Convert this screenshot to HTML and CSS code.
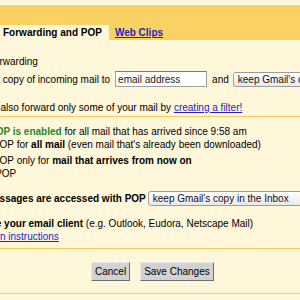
FILE: index.html
```html
<!DOCTYPE html>
<html>
<head>
<meta charset="utf-8">
<title>Settings - Forwarding and POP</title>
<link rel="stylesheet" href="styles.css">
</head>
<body>
<div id="onglets">
	<span class="onglet actif">Forwarding and POP</span>
	<a href="#" class="onglet lien">Web Clips</a>
</div>
<form id="reglages" action="#" method="post">
	<!-- Forwarding -->
	<div class="bloc" id="bloc-forward">
		<div class="colonne">
			<label class="ligne l-disable"><input type="radio" name="fwd" checked> Disable forwarding</label>
			<label class="ligne l-forward"><input type="radio" name="fwd"> Forward a copy of incoming mail to
				<input type="text" class="adresse" value="email address">
				<span class="et">and</span>
				<select class="choix">
					<option>keep Gmail's copy in the Inbox</option>
					<option>archive Gmail's copy</option>
					<option>delete Gmail's copy</option>
				</select>
			</label>
			<p class="ligne l-tip"><b>Tip:</b>&nbsp;You can also forward only some of your mail by&nbsp;<a href="#">creating a filter!</a></p>
		</div>
	</div>
	<!-- POP Download -->
	<div class="bloc" id="bloc-pop">
		<div class="colonne">
			<p class="ligne l-status">1. Status:&nbsp;<span class="actif-pop">POP is enabled</span>&nbsp;for all mail that has arrived since 9:58 am</p>
			<label class="ligne l-pop"><input type="radio" name="pop"> Enable POP for&nbsp;<b>all mail</b>&nbsp;(even mail that's already been downloaded)</label>
			<label class="ligne l-pop l-pop2"><input type="radio" name="pop"> Enable POP only for&nbsp;<b>mail that arrives from now on</b></label>
			<label class="ligne l-pop"><input type="radio" name="pop"> Disable POP</label>
			<div class="ligne l-when"><b>2. When messages are accessed with POP</b>
				<select class="choix choix-pop">
					<option>keep Gmail's copy in the Inbox</option>
					<option>archive Gmail's copy</option>
					<option>delete Gmail's copy</option>
				</select>
			</div>
			<p class="ligne l-config"><b>3. Configure your email client</b>&nbsp;(e.g. Outlook, Eudora, Netscape Mail)</p>
			<p class="ligne l-instr"><a href="#">Configuration instructions</a></p>
		</div>
	</div>
	<!-- Boutons -->
	<div class="bloc" id="bloc-submit">
		<div class="colonne boutons">
			<input type="button" value="Cancel">
			<input type="submit" value="Save Changes">
		</div>
	</div>
</form>
</body>
</html>
```

FILE: styles.css
```css
html,body,form,p,label,input,select {
	margin:0;
	padding:0;
}
html {
	overflow:hidden;
}
body {
	background-color:#fff7d9;
	font-family:"Liberation Sans", Arial, sans-serif;
	font-size:10px;
	color:#000;
}
a {
	color:#2323c8;
}
#onglets {
	margin-top:5px;
	height:35px;
	background-color:#fad163;
	display:flex;
	align-items:flex-end;
	white-space:nowrap;
}
.onglet {
	height:15px;
	line-height:15px;
	font-weight:bold;
}
.onglet.actif {
	background-color:#fff7d9;
	margin-left:-4px;
	padding:0 7px;
}
.onglet.lien {
	margin-left:6px;
	color:#1f1fc6;
}
.colonne {
	margin-left:-64px;
}
.ligne {
	display:flex;
	align-items:center;
	height:13px;
	white-space:nowrap;
}
.ligne input[type=radio] {
	width:13px;
	height:13px;
	margin:0 6px 0 0;
	flex:none;
}
.bloc {
	border-bottom:1px solid #f8cd5c;
}
/* forwarding */
#bloc-forward {
	padding:13px 0 1px;
}
.l-disable {
	height:16px;
}
.l-forward {
	height:18px;
	margin-top:1px;
}
input.adresse {
	width:92px;
	height:16px;
	box-sizing:border-box;
	margin-left:5px;
	border:1px solid #a0a0a0;
	border-top-color:#7c7c7c;
	background:#fff;
	font:10px "Liberation Sans", Arial, sans-serif;
	color:#222;
	padding:0 2px;
}
span.et {
	margin:0 4px 0 5px;
}
select.choix {
	-webkit-appearance:none;
	appearance:none;
	width:170px;
	height:15px;
	box-sizing:border-box;
	border:1px solid #9c9c9c;
	border-radius:3px;
	background:linear-gradient(#ffffff, #e9e9e9);
	font:10px "Liberation Sans", Arial, sans-serif;
	color:#111;
	padding:0 4px;
	flex:none;
}
.l-tip {
	height:16px;
	margin-top:11px;
	padding-left:5px;
}
/* pop */
#bloc-pop {
	padding:8px 0 5px;
}
.l-status {
	padding-left:8px;
}
.actif-pop {
	color:#1b8a2b;
	font-weight:bold;
}
.l-pop {
	padding-left:4px;
}
.l-pop2 {
	margin-top:3px;
}
.l-when {
	height:15px;
	margin-top:11px;
	padding-left:8px;
}
select.choix-pop {
	margin-left:2px;
}
.l-config {
	margin-top:11px;
	padding-left:7px;
}
.l-instr {
	padding-left:10px;
}
/* boutons */
#bloc-submit {
	padding:13px 0 12px;
}
.boutons {
	display:flex;
	gap:10px;
	padding-left:155px;
}
.boutons input {
	height:19px;
	padding:0 3px;
	border:1px solid;
	border-color:#e8e8e8 #6e6e6e #6e6e6e #e8e8e8;
	background-color:#d2d2d2;
	font:10px "Liberation Sans", Arial, sans-serif;
	color:#000;
}
```
